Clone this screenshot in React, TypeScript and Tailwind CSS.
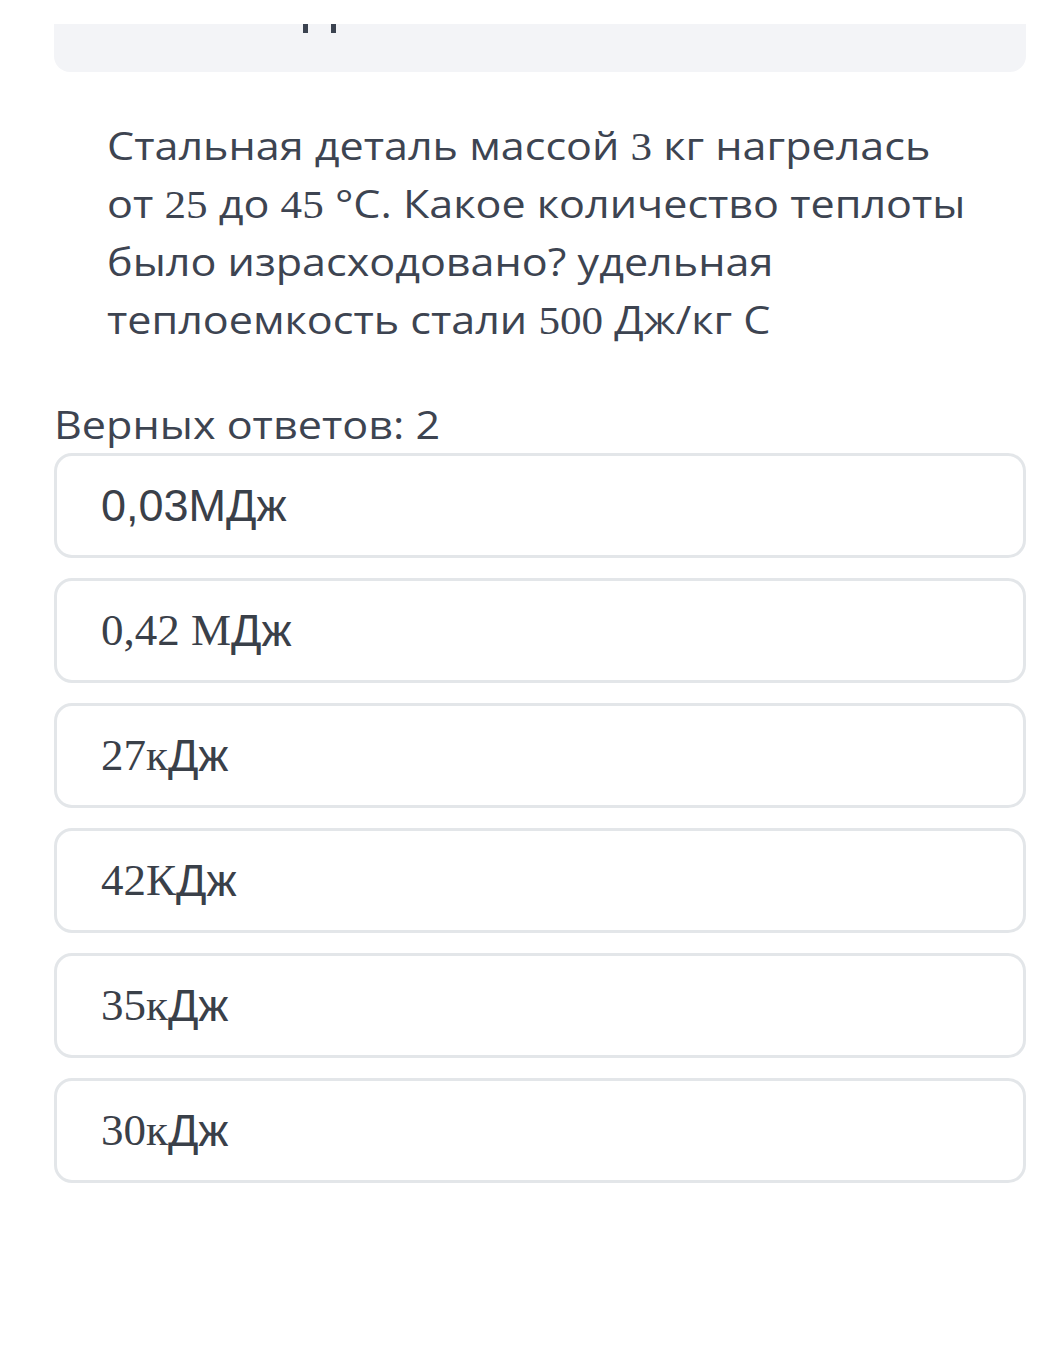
import React from "react";

const serif = "font-['Liberation_Serif',serif]";
const sans = "font-['Liberation_Sans',Arial,sans-serif]";
const num = "font-['Liberation_Serif',serif] leading-none text-[39px]";

function Opt({ children }: { children: React.ReactNode }) {
  return (
    <div className="h-[105px] rounded-[18px] border-[3px] border-[#e3e6e9] bg-white flex items-center pl-[44px] text-[#3a4049] text-[45px] leading-none">
      {children}
    </div>
  );
}

export default function App() {
  return (
    <div className="w-[1045px] h-[1368px] bg-white overflow-hidden font-['Open_Sans',sans-serif]">
      <div className="h-[24px]" />
      <div className="relative ml-[54px] w-[972px] h-[48px] bg-[#f3f4f7] rounded-b-[16px]">
        <div className="absolute left-[249px] top-0 w-[5px] h-[9px] bg-[#3b4350]" />
        <div className="absolute left-[277px] top-0 w-[5px] h-[9px] bg-[#3b4350]" />
      </div>
      <div className="ml-[54px] w-[972px]">
        <div className="pl-[53px] pt-[44px]">
          <div className="origin-left scale-x-[1.105] whitespace-nowrap text-[39px] leading-[58px] text-[#3d4451]">
            <div className="h-[58px]">
              Стальная деталь массой <span className={num}>3</span> кг нагрелась
            </div>
            <div className="h-[58px]">
              от <span className={num}>25</span> до <span className={num}>45</span> °C. Какое количество теплоты
            </div>
            <div className="h-[58px]">было израсходовано? удельная</div>
            <div className="h-[58px]">
              теплоемкость стали <span className={num}>500</span> Дж/кг С
            </div>
          </div>
        </div>
        <div className="mt-[52px] h-[48px] origin-left scale-x-[1.135] whitespace-nowrap text-[38px] leading-[48px] text-[#3d4451]">
          Верных ответов: 2
        </div>
        <div className="mt-[5px] flex flex-col gap-[20px]">
          <Opt>
            <span className={sans}>0,03МДж</span>
          </Opt>
          <Opt>
            <span className={serif}>0,42 М</span>
            <span className={sans}>Дж</span>
          </Opt>
          <Opt>
            <span className={serif}>27к</span>
            <span className={sans}>Дж</span>
          </Opt>
          <Opt>
            <span className={serif}>42К</span>
            <span className={sans}>Дж</span>
          </Opt>
          <Opt>
            <span className={serif}>35к</span>
            <span className={sans}>Дж</span>
          </Opt>
          <Opt>
            <span className={serif}>30к</span>
            <span className={sans}>Дж</span>
          </Opt>
        </div>
      </div>
    </div>
  );
}
